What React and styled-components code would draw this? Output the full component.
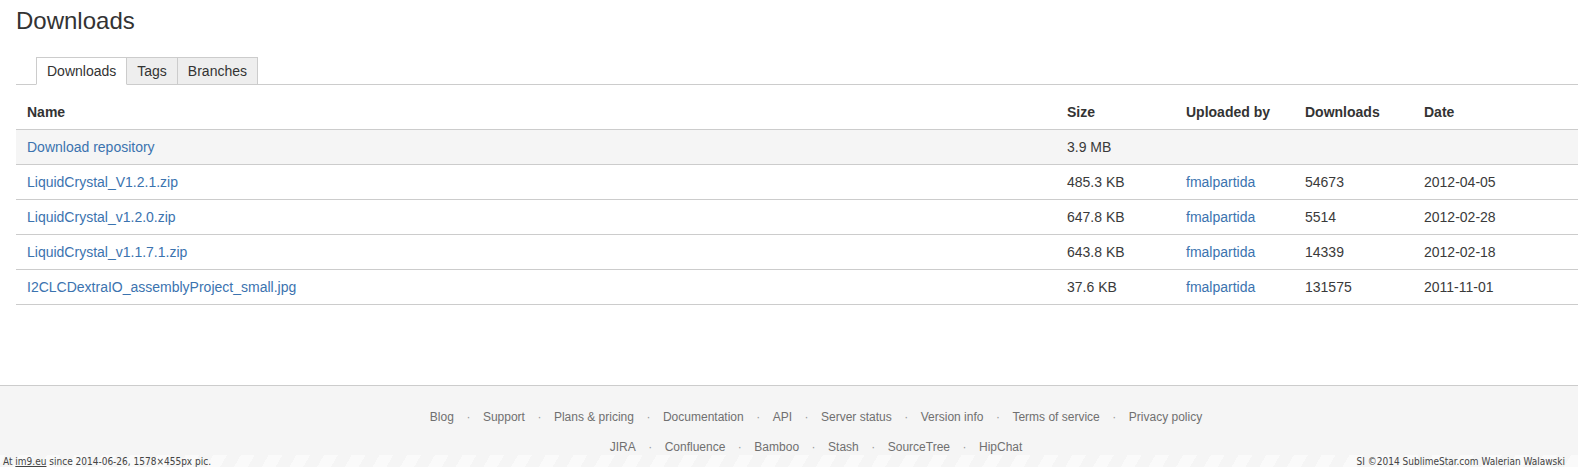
import React from "react";
import styled, { createGlobalStyle } from "styled-components";

const GlobalStyle = createGlobalStyle`
  html, body {
    margin: 0;
    padding: 0;
    background: #fff;
    overflow: hidden;
  }
  body {
    font-family: "Liberation Sans", Arial, sans-serif;
    font-size: 14px;
    color: #333;
  }
`;

const files = [
  { name: "LiquidCrystal_V1.2.1.zip", size: "485.3 KB", user: "fmalpartida", downloads: "54673", date: "2012-04-05" },
  { name: "LiquidCrystal_v1.2.0.zip", size: "647.8 KB", user: "fmalpartida", downloads: "5514", date: "2012-02-28" },
  { name: "LiquidCrystal_v1.1.7.1.zip", size: "643.8 KB", user: "fmalpartida", downloads: "14339", date: "2012-02-18" },
  { name: "I2CLCDextraIO_assemblyProject_small.jpg", size: "37.6 KB", user: "fmalpartida", downloads: "131575", date: "2011-11-01" },
];

const footerLinks = [
  ["Blog", "Support", "Plans & pricing", "Documentation", "API", "Server status", "Version info", "Terms of service", "Privacy policy"],
  ["JIRA", "Confluence", "Bamboo", "Stash", "SourceTree", "HipChat"],
];

const App = () => {
  return (
    <Page>
      <GlobalStyle />
      <Main>
        <Title>Downloads</Title>
        <Tabs>
          <Tab active>Downloads</Tab>
          <Tab>Tags</Tab>
          <Tab>Branches</Tab>
        </Tabs>
        <Table>
          <HeadRow>
            <Cell>Name</Cell>
            <Cell>Size</Cell>
            <Cell>Uploaded by</Cell>
            <Cell>Downloads</Cell>
            <Cell>Date</Cell>
          </HeadRow>
          <Row shaded>
            <Cell><Link>Download repository</Link></Cell>
            <Cell>3.9 MB</Cell>
            <Cell />
            <Cell />
            <Cell />
          </Row>
          {files.map((f) => (
            <Row key={f.name}>
              <Cell><Link>{f.name}</Link></Cell>
              <Cell>{f.size}</Cell>
              <Cell><Link>{f.user}</Link></Cell>
              <Cell>{f.downloads}</Cell>
              <Cell>{f.date}</Cell>
            </Row>
          ))}
        </Table>
      </Main>
      <Footer>
        {footerLinks.map((line, i) => (
          <FooterLine key={i}>
            {line.map((item) => (
              <FooterItem key={item}>{item}</FooterItem>
            ))}
          </FooterLine>
        ))}
        <Stamp>
          <span>
            At <u>im9.eu</u> since 2014-06-26, 1578×455px pic.
          </span>
          <span>SI ©2014 SublimeStar.com Walerian Walawski</span>
        </Stamp>
      </Footer>
    </Page>
  );
};

export default App;

const Page = styled.div`
  height: 467px;
  display: flex;
  flex-direction: column;
  overflow: hidden;
`;

const Main = styled.div`
  padding: 0 0 80px 16px;
`;

const Title = styled.h1`
  margin: 0;
  padding-top: 7px;
  height: 50px;
  font-size: 24px;
  font-weight: normal;
  line-height: 28px;
  color: #333;
`;

const Tabs = styled.div`
  display: flex;
  padding-left: 20px;
  border-bottom: 1px solid #ccc;
  height: 27px;
`;

const Tab = styled.div`
  box-sizing: border-box;
  padding: 0 10px;
  display: flex;
  align-items: center;
  border: 1px solid #ccc;
  border-left-width: ${(p) => (p.active ? "1px" : "0")};
  border-bottom-color: ${(p) => (p.active ? "#fff" : "#ccc")};
  height: 28px;
  background: ${(p) => (p.active ? "#fff" : "#eee")};
  color: #333;
  font-size: 14px;
`;

const Table = styled.div`
  margin-top: 10px;
`;

const HeadRow = styled.div`
  display: grid;
  grid-template-columns: 1fr 119px 119px 119px 165px;
  height: 34px;
  align-items: center;
  border-bottom: 1px solid #ccc;
  font-weight: bold;
  color: #333;
`;

const Row = styled(HeadRow)`
  font-weight: normal;
  color: #3a3a3a;
  background: ${(p) => (p.shaded ? "#f5f5f5" : "#fff")};
`;

const Cell = styled.div`
  padding-left: 11px;
  white-space: nowrap;
`;

const Link = styled.a`
  color: #3b73af;
  text-decoration: none;
`;

const Footer = styled.footer`
  flex: 1;
  position: relative;
  background: #f5f5f5;
  border-top: 1px solid #ccc;
  padding: 16px 0 0 54px;
`;

const FooterLine = styled.div`
  display: flex;
  justify-content: center;
  height: 30px;
  align-items: center;
  font-size: 12px;
  color: #707070;
`;

const FooterItem = styled.span`
  & + &::before {
    content: "·";
    color: #999;
    margin: 0 12.5px;
  }
`;

const Stamp = styled.div`
  position: absolute;
  left: 0;
  right: 0;
  bottom: 0;
  height: 12px;
  padding: 0 13px 0 3px;
  display: flex;
  justify-content: space-between;
  align-items: center;
  font-family: "DejaVu Sans Condensed", "DejaVu Sans", sans-serif;
  font-size: 10px;
  color: #444;
  background: repeating-linear-gradient(
    -60deg,
    rgba(255, 255, 255, 0.55) 0 12px,
    rgba(255, 255, 255, 0) 12px 24px
  );
`;
